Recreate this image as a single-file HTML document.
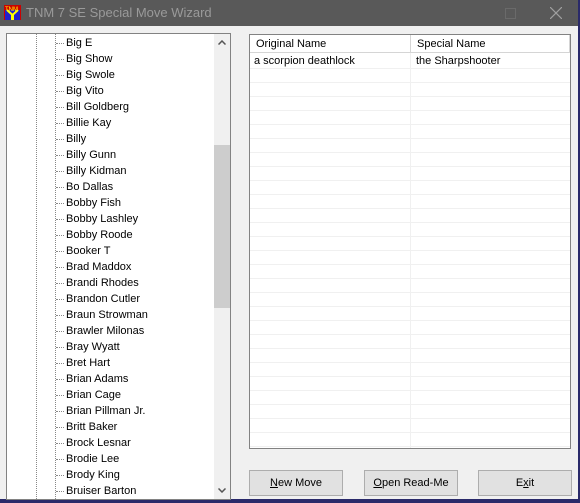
<!DOCTYPE html><html><head><style>
body{margin:0;width:580px;height:503px;background:#2a2a6a;position:relative;overflow:hidden;font-family:"Liberation Sans",sans-serif;font-size:11px;color:#000}
.win{position:absolute;left:0;top:0;width:578px;height:499px;background:#f0f0f0}
.title{position:absolute;left:0;top:0;width:578px;height:26px;background:#595959;color:#9a9a9a;font-size:13px}
.title span{position:absolute;left:26px;top:5px}
.tree{position:absolute;left:6px;top:33px;width:223px;height:465px;border:1px solid #828282;background:#fff;overflow:hidden}
.item{position:absolute;left:59px;height:16px;line-height:17px}
.dh{position:absolute;left:49px;width:8px;border-top:1px dotted #888}
.vl{position:absolute;top:0;bottom:0;border-left:1px dotted #888}
.sb{position:absolute;left:207px;top:0;width:16px;height:465px;background:#f0f0f0}
.thumb{position:absolute;left:0;top:111px;width:16px;height:163px;background:#cdcdcd}
.list{position:absolute;left:249px;top:34px;width:320px;height:413px;border:1px solid #828282;background:#fff;overflow:hidden}
.hdr{position:absolute;top:0;height:18px;line-height:19px;border-right:1px solid #d5d5d5;border-bottom:1px solid #d5d5d5;padding-left:6px;box-sizing:border-box}
.row{position:absolute;left:0;width:320px;border-top:1px solid #f0f0f0}
.btn{position:absolute;top:470px;width:94px;height:26px;box-sizing:border-box;background:#e1e1e1;border:1px solid #adadad;text-align:center;line-height:25px}
</style></head><body><div class="win">
<div class="title"><svg style="position:absolute;left:4px;top:5px" width="17" height="15"><rect width="17" height="15" fill="#c00"/><rect x="1" y="5" width="15" height="10" fill="#22c"/><path d="M3 5 L8.5 10 L14 5" stroke="#ff0" stroke-width="2" fill="none"/><rect x="7" y="9" width="3" height="6" fill="#ff0"/><text x="1" y="6" font-size="6" fill="#ff0">TNM</text></svg><span>TNM 7 SE Special Move Wizard</span>
<div style="position:absolute;left:505px;top:8px;width:9px;height:9px;border:1px solid #6a6a6a"></div>
<svg style="position:absolute;left:550px;top:7px" width="12" height="12"><path d="M0 0L12 12M12 0L0 12" stroke="#a0a0a0" stroke-width="1.2"/></svg></div>
<div class="tree">
<div class="vl" style="left:29px"></div><div class="vl" style="left:48px"></div>
<div id="items"></div>
<div class="sb"><div class="thumb"></div>
<svg style="position:absolute;left:4px;top:6px" width="8" height="5"><path d="M0.5 4.5L4 1L7.5 4.5" stroke="#555" stroke-width="1.5" fill="none"/></svg>
<svg style="position:absolute;left:4px;top:454px" width="8" height="5"><path d="M0.5 0.5L4 4L7.5 0.5" stroke="#555" stroke-width="1.5" fill="none"/></svg></div>
</div>
<div class="list">
<div class="hdr" style="left:0;width:161px">Original Name</div>
<div class="hdr" style="left:161px;width:159px">Special Name</div>
<div style="position:absolute;left:160px;top:18px;bottom:0;border-left:1px solid #f0f0f0"></div>
<div style="position:absolute;left:4px;top:20px">a scorpion deathlock</div>
<div style="position:absolute;left:166px;top:20px">the Sharpshooter</div>
<div id="rows"></div>
</div>
<div class="btn" style="left:249px"><u>N</u>ew Move</div>
<div class="btn" style="left:364px"><u>O</u>pen Read-Me</div>
<div class="btn" style="left:478px">E<u>x</u>it</div>
</div>
<script>
var n=["Big E","Big Show","Big Swole","Big Vito","Bill Goldberg","Billie Kay","Billy","Billy Gunn","Billy Kidman","Bo Dallas","Bobby Fish","Bobby Lashley","Bobby Roode","Booker T","Brad Maddox","Brandi Rhodes","Brandon Cutler","Braun Strowman","Brawler Milonas","Bray Wyatt","Bret Hart","Brian Adams","Brian Cage","Brian Pillman Jr.","Britt Baker","Brock Lesnar","Brodie Lee","Brody King","Bruiser Barton"];
var h="";n.forEach(function(s,i){var y=1+i*16;h+='<div class="dh" style="top:'+(y+8)+'px"></div><div class="item" style="top:'+y+'px">'+s+'</div>';});
document.getElementById("items").innerHTML=h;
var r="";for(var y=33;y<413;y+=14)r+='<div class="row" style="top:'+y+'px"></div>';document.getElementById("rows").innerHTML=r;
</script></body></html>
